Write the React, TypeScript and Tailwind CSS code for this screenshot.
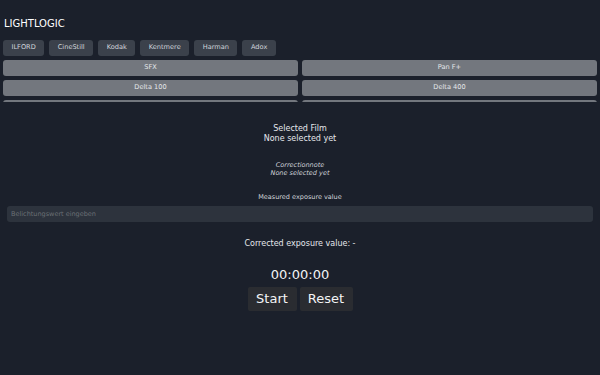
import React, { useState } from "react";

const brands = ["ILFORD", "CineStill", "Kodak", "Kentmere", "Harman", "Adox"];
const films = ["SFX", "Pan F+", "Delta 100", "Delta 400", "Delta 3200", "FP4+"];

const App: React.FC = () => {
  const [value, setValue] = useState<string>("");

  return (
    <div
      className="min-h-[375px] w-[600px] bg-[#1b202b] text-[#e5e7eb] px-[3px]"
      style={{ fontFamily: '"DejaVu Sans", Verdana, sans-serif' }}
    >
      <h1 className="pt-[17px] text-[10px] leading-[14px] text-white ps-[1px]">LIGHTLOGIC</h1>

      <div className="mt-[9px] flex gap-[5px]">
        {brands.map((b) => (
          <button
            key={b}
            className="h-[16px] px-[8.5px] rounded-[3px] bg-[#3b414b] text-[6.6px] text-[#d1d5db]"
          >
            {b}
          </button>
        ))}
      </div>

      <div className="mt-[4px] h-[42px] overflow-hidden grid grid-cols-2 gap-x-[4px] gap-y-[4px]">
        {films.map((f) => (
          <button
            key={f}
            className="h-[16px] rounded-[3px] bg-[#73777e] text-[6.6px] text-[#e5e7eb]"
          >
            {f}
          </button>
        ))}
      </div>

      <div className="mt-[22px] text-center text-[8px] leading-[10px] text-[#e5e7eb]">
        <p>Selected Film</p>
        <p>None selected yet</p>
      </div>

      <div className="mt-[17px] text-center text-[6.5px] leading-[8px] italic text-[#d1d5db]">
        <p>Correctionnote</p>
        <p>None selected yet</p>
      </div>

      <p className="mt-[16px] text-center text-[6.5px] leading-[8px] text-[#d1d5db]">
        Measured exposure value
      </p>
      <div className="px-[4px] mt-[5px]">
        <input
          className="block w-full h-[16px] rounded-[3px] bg-[#2d333d] px-[4px] text-[6.5px] text-[#d1d5db] placeholder:text-[#6b7075] outline-none"
          placeholder="Belichtungswert eingeben"
          value={value}
          onChange={(e) => setValue(e.target.value)}
        />
      </div>

      <p className="mt-[17px] text-center text-[8px] leading-[10px] text-[#e5e7eb]">
        Corrected exposure value: -
      </p>

      <p className="mt-[18px] text-center text-[13px] leading-[16px] text-[#f3f4f6]">00:00:00</p>

      <div className="mt-[4px] flex justify-center gap-[3px]">
        <button className="h-[24px] w-[49px] rounded-[2px] bg-[#2a2c31] text-[13px] text-[#f3f4f6]">
          Start
        </button>
        <button className="h-[24px] w-[53px] rounded-[2px] bg-[#2a2c31] text-[13px] text-[#f3f4f6]">
          Reset
        </button>
      </div>
    </div>
  );
};

export default App;
